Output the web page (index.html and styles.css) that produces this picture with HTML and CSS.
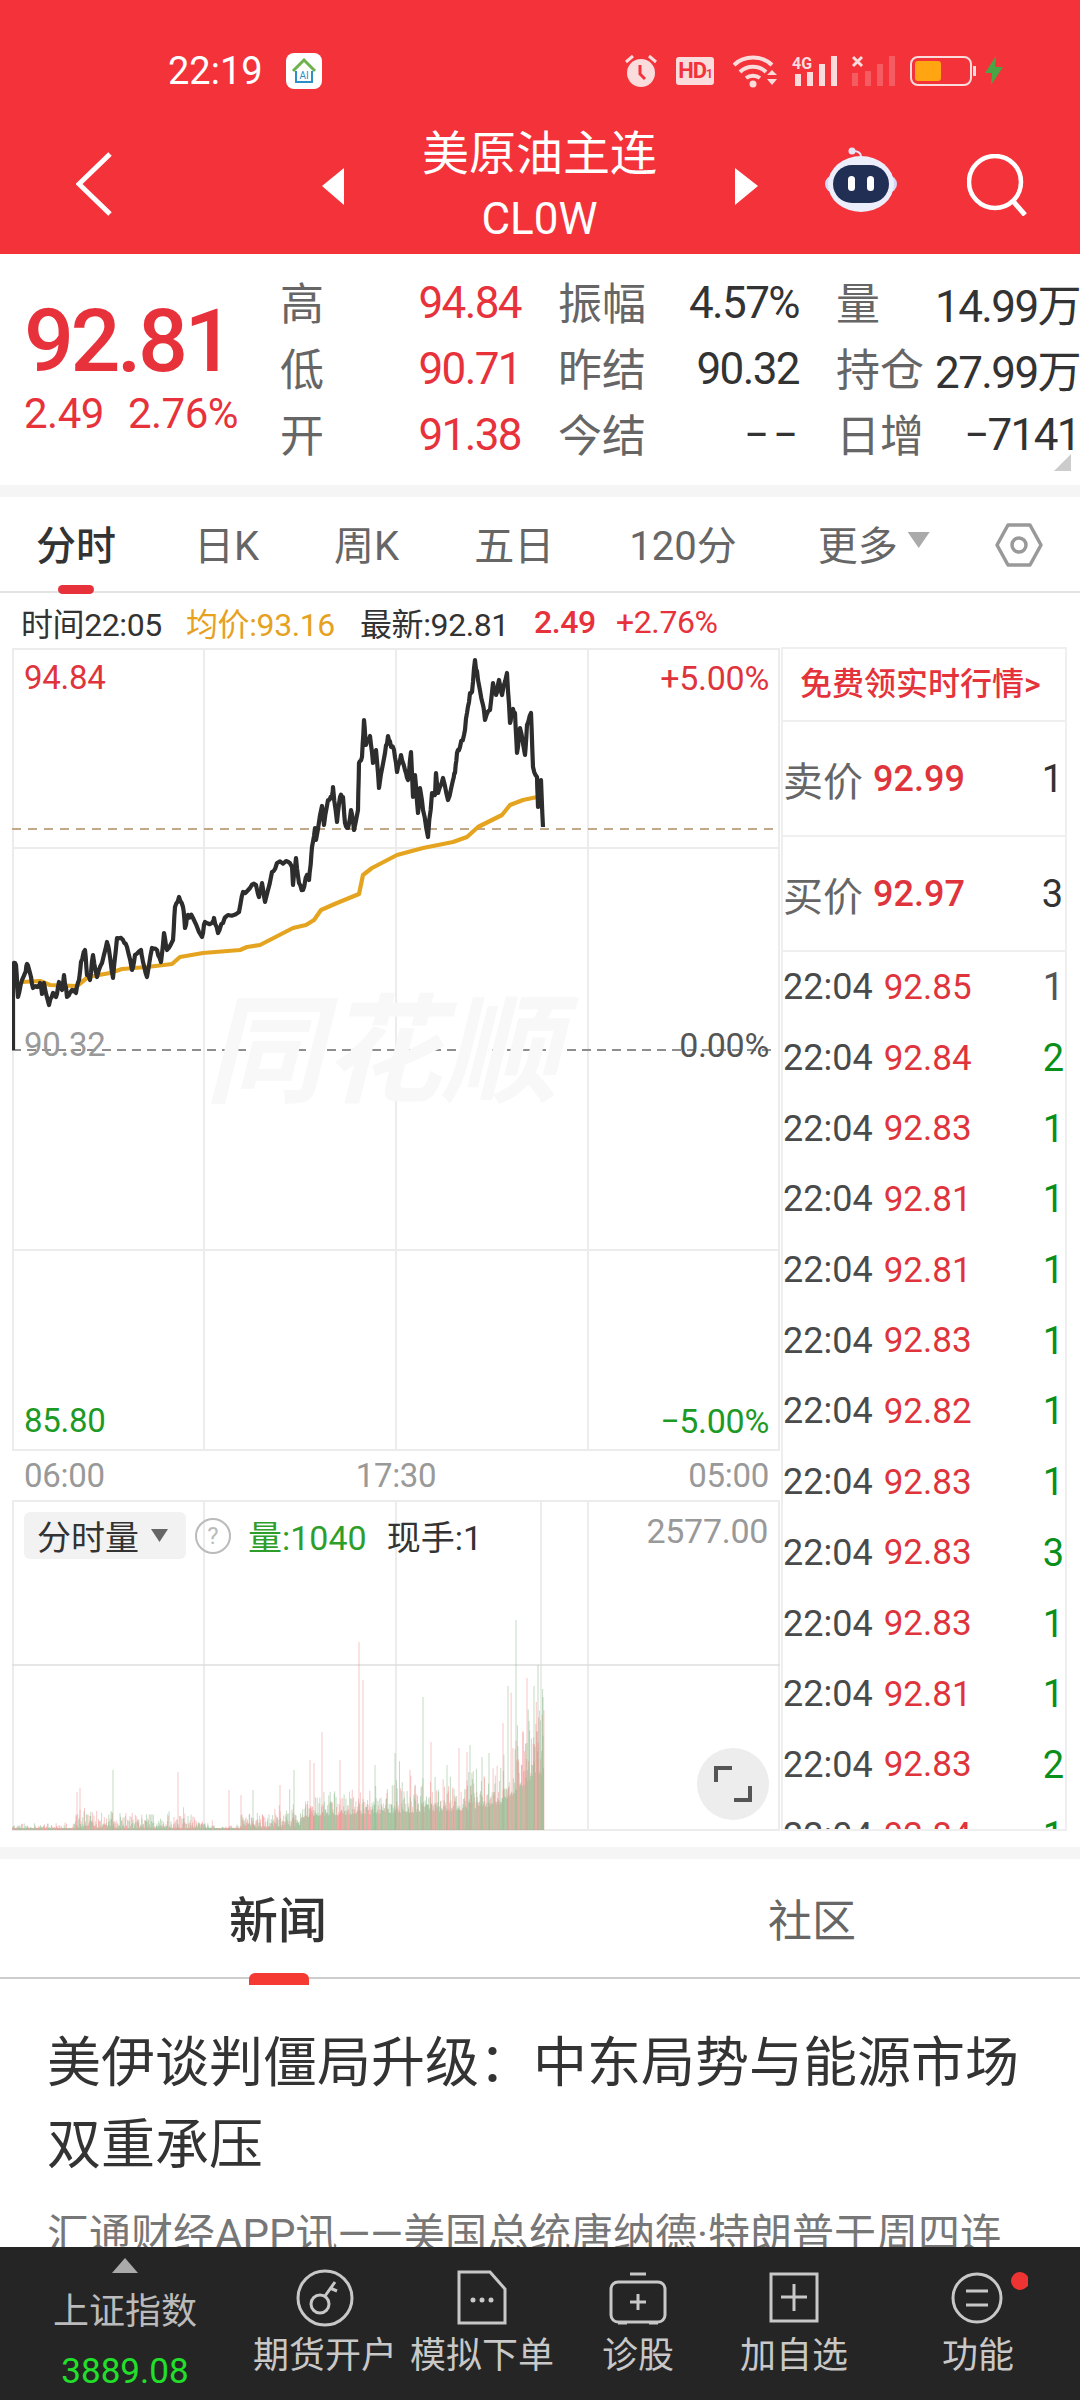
FILE: index.html
```html
<!DOCTYPE html>
<html lang="zh-CN">
<head>
  <meta charset="UTF-8" />
  <meta name="viewport" content="width=device-width, initial-scale=1.0"/>
  <title>美原油主连</title>
  <link rel="stylesheet" href="styles.css">
</head>
<body>
  <header class="top">
    <div class="status">
      <span class="clock">22:19</span>
      <svg class="app-icon" width="36" height="36" viewBox="0 0 36 36">
        <rect width="36" height="36" rx="8" fill="#fff"/>
        <path d="M7 18 18 7l11 11" fill="none" stroke="#6db24a" stroke-width="3"/>
        <path d="M10 18v11h16V18" fill="none" stroke="#2b8fc9" stroke-width="2"/>
        <text x="18" y="26" font-size="10" font-family="Roboto" fill="#2b8fc9" text-anchor="middle">AI</text>
      </svg>
      <div class="status-icons">
        <svg width="32" height="33" viewBox="0 0 32 33">
          <path d="M1 8 8 2M31 8 24 2" stroke="#fbdcdc" stroke-width="3" fill="none"/>
          <circle cx="16" cy="19" r="14" fill="#fbdcdc"/>
          <path d="M15 11v9l5 5" stroke="#f3323a" stroke-width="3" fill="none"/>
        </svg>
        <span class="hd">HD<small>1</small></span>
        <svg class="wifi" width="44" height="34" viewBox="0 0 44 34">
          <path d="M1 11C11 1 29 1 39 11M7 18c7-7 19-7 26 0M13 24c4-3 10-3 14 0" fill="none" stroke="#fbdcdc" stroke-width="4"/>
          <circle cx="20" cy="30" r="3.5" fill="#fbdcdc"/>
          <path d="M34 21h10l-5-5zM34 25h10l-5 6z" fill="#fbdcdc"/>
        </svg>
        <svg width="45" height="31" viewBox="0 0 45 31">
          <text x="0" y="14" font-size="16" font-weight="700" font-family="Roboto" fill="#fbdcdc">4G</text>
          <path d="M3 19h6v12H3zM15 17h6v14h-6zM27 9h6v22h-6zM39 1h6v30h-6z" fill="#fbdcdc"/>
        </svg>
        <svg width="43" height="31" viewBox="0 0 43 31">
          <path d="M1 2l9 9M10 2l-9 9" stroke="#fbdcdc" stroke-width="3"/>
          <path d="M0 18h6v13H0zM13 16h6v15h-6zM25 9h6v22h-6zM37 1h6v30h-6z" fill="#fbdcdc" fill-opacity=".25"/>
        </svg>
        <svg class="battery" width="67" height="30" viewBox="0 0 67 30">
          <rect x="1" y="1" width="60" height="28" rx="7" fill="none" stroke="#fbdcdc" stroke-width="2"/>
          <rect x="5" y="5" width="26" height="20" rx="3" fill="#ffa512"/>
          <rect x="63" y="10" width="3" height="10" fill="#fbdcdc"/>
        </svg>
        <svg class="bolt" width="18" height="29" viewBox="0 0 18 29">
          <path d="M11 0 0 17h7l-1 12L18 11h-8z" fill="#4aa344"/>
        </svg>
      </div>
    </div>
    <nav class="nav">
      <svg class="back" width="36" height="64" viewBox="0 0 36 64">
        <path d="M34 2 3 32l31 30" fill="none" stroke="#fff" stroke-width="5"/>
      </svg>
      <svg class="arrow-l" width="22" height="37" viewBox="0 0 22 37"><path d="M22 0v37L0 18z" fill="#fff"/></svg>
      <div class="title">
        <div class="name">美原油主连</div>
        <div class="code">CL0W</div>
      </div>
      <svg width="23" height="37" viewBox="0 0 23 37"><path d="M0 0v37l23-19z" fill="#fff"/></svg>
      <svg class="robot" width="72" height="65" viewBox="0 0 72 65">
        <circle cx="27" cy="4" r="3.5" fill="#e8e6f6"/>
        <path d="M28 4c5 0 8 2 8 6" fill="none" stroke="#e8e6f6" stroke-width="2"/>
        <rect x="0" y="28" width="72" height="18" rx="9" fill="#d5d6f4"/>
        <ellipse cx="36" cy="37" rx="33" ry="28" fill="#edeefb"/>
        <rect x="8" y="18" width="56" height="38" rx="19" fill="#222f55"/>
        <rect x="23" y="29" width="7" height="15" rx="3.5" fill="#fff"/>
        <rect x="42" y="29" width="7" height="15" rx="3.5" fill="#fff"/>
      </svg>
      <svg class="search" width="60" height="62" viewBox="0 0 60 62">
        <circle cx="28" cy="28" r="26" fill="none" stroke="#fff" stroke-width="4.5"/>
        <path d="M46 47l12 14" stroke="#fff" stroke-width="5"/>
      </svg>
    </nav>
  </header>

  <section class="quote">
    <div class="now">
      <div class="price">92.81</div>
      <div class="change"><span>2.49</span><span>2.76%</span></div>
    </div>
    <div class="stats">
      <div class="stat"><label>高</label><b class="up">94.84</b></div>
      <div class="stat"><label>振幅</label><b>4.57%</b></div>
      <div class="stat"><label>量</label><b>14.99万</b></div>
      <div class="stat"><label>低</label><b class="up">90.71</b></div>
      <div class="stat"><label>昨结</label><b>90.32</b></div>
      <div class="stat"><label>持仓</label><b>27.99万</b></div>
      <div class="stat"><label>开</label><b class="up">91.38</b></div>
      <div class="stat"><label>今结</label><b class="dash">−−</b></div>
      <div class="stat"><label>日增</label><b>−7141</b></div>
    </div>
    <i class="corner"></i>
  </section>

  <div class="gap"></div>

  <div class="tabs">
    <span class="tab active">分时</span>
    <span class="tab">日K</span>
    <span class="tab">周K</span>
    <span class="tab">五日</span>
    <span class="tab">120分</span>
    <span class="tab more">更多<i></i></span>
    <svg class="hex" width="48" height="44" viewBox="0 0 48 44">
      <path d="M13 2h22l11 20-11 20H13L2 22z" fill="none" stroke="#999" stroke-width="3.5" stroke-linejoin="round"/>
      <circle cx="24" cy="22" r="7" fill="none" stroke="#999" stroke-width="3.5"/>
    </svg>
  </div>

  <div class="info">
    <span class="i-time">时间22:05</span>
    <span class="i-avg">均价:93.16</span>
    <span class="i-last">最新:92.81</span>
    <span class="i-chg">2.49</span>
    <span class="i-pct">+2.76%</span>
  </div>

  <div class="market">
    <div class="chart">
      <!-- viewBox uses page coordinates so the traced points stay readable -->
      <svg class="plot" width="768" height="1184" viewBox="12 648 768 1184">
        <g stroke="#ececec" stroke-width="2">
          <path d="M13 648v803M204 648v803M396 648v803M588 648v803M779 648v803" fill="none"/>
          <path d="M12 649h768M12 848h768M12 1250h768M12 1450h768" fill="none"/>
          <path d="M13 1501v329M204 1501v329M396 1501v329M588 1501v329M541 1501v329M779 1501v329" fill="none"/>
          <path d="M12 1501h768M12 1830h768" fill="none"/>
        </g>
        <path d="M12 1665h768" stroke="#dedede" stroke-width="1.5"/>
        <path d="M12 829h768" stroke="#c0a888" stroke-width="2" stroke-dasharray="9 7"/>
        <path d="M12 1050h762" stroke="#8e8e8e" stroke-width="2" stroke-dasharray="9 6"/>
        <path id="volRed" fill="none" stroke="#ee7f7f" stroke-opacity=".55" stroke-width=".8"/>
        <path id="volGreen" fill="none" stroke="#80b480" stroke-opacity=".6" stroke-width=".8"/>
        <polyline id="avgLine" fill="none" stroke="#e5a41f" stroke-width="4.2" stroke-linejoin="round"/>
        <polyline id="priceLine" fill="none" stroke="#2d2d2d" stroke-width="4.2" stroke-linejoin="round"/>
      </svg>
      <div class="watermark">同花顺</div>
      <span class="lb lb-high">94.84</span>
      <span class="lb lb-hp">+5.00%</span>
      <span class="lb lb-base">90.32</span>
      <span class="lb lb-zero">0.00%</span>
      <span class="lb lb-low">85.80</span>
      <span class="lb lb-lp">−5.00%</span>
      <span class="lb lb-t1">06:00</span>
      <span class="lb lb-t2">17:30</span>
      <span class="lb lb-t3">05:00</span>
      <div class="vol-head">
        <span class="vol-tag">分时量<i></i></span>
        <span class="help">?</span>
        <span class="vol-now">量:1040</span>
        <span class="vol-hand">现手:1</span>
      </div>
      <span class="lb lb-max">2577.00</span>
      <button class="expand">
        <svg width="38" height="36" viewBox="0 0 38 36">
          <path d="M2 16V2h16M36 20v14H20" fill="none" stroke="#555" stroke-width="4"/>
        </svg>
      </button>
    </div>

    <aside class="side">
      <div class="promo">免费领实时行情&gt;</div>
      <div class="bid"><span class="bid-l">卖价</span><span class="bid-p">92.99</span><span class="bid-n">1</span></div>
      <div class="bid"><span class="bid-l">买价</span><span class="bid-p">92.97</span><span class="bid-n">3</span></div>
      <div class="trade"><span>22:04</span><span class="t-p">92.85</span><span class="t-n grey">1</span></div>
      <div class="trade"><span>22:04</span><span class="t-p">92.84</span><span class="t-n">2</span></div>
      <div class="trade"><span>22:04</span><span class="t-p">92.83</span><span class="t-n">1</span></div>
      <div class="trade"><span>22:04</span><span class="t-p">92.81</span><span class="t-n">1</span></div>
      <div class="trade"><span>22:04</span><span class="t-p">92.81</span><span class="t-n">1</span></div>
      <div class="trade"><span>22:04</span><span class="t-p">92.83</span><span class="t-n">1</span></div>
      <div class="trade"><span>22:04</span><span class="t-p">92.82</span><span class="t-n">1</span></div>
      <div class="trade"><span>22:04</span><span class="t-p">92.83</span><span class="t-n">1</span></div>
      <div class="trade"><span>22:04</span><span class="t-p">92.83</span><span class="t-n">3</span></div>
      <div class="trade"><span>22:04</span><span class="t-p">92.83</span><span class="t-n">1</span></div>
      <div class="trade"><span>22:04</span><span class="t-p">92.81</span><span class="t-n">1</span></div>
      <div class="trade"><span>22:04</span><span class="t-p">92.83</span><span class="t-n">2</span></div>
      <div class="trade"><span>22:04</span><span class="t-p">92.84</span><span class="t-n">1</span></div>
    </aside>
  </div>

  <div class="gap gap-news"></div>

  <div class="news-tabs">
    <span class="n-tab active">新闻</span>
    <span class="n-tab">社区</span>
  </div>

  <article class="news">
    <h2>美伊谈判僵局升级：中东局势与能源市场<br>双重承压</h2>
    <p>汇通财经APP讯——美国总统唐纳德·特朗普于周四连</p>
  </article>

  <footer class="bar">
    <div class="item index">
      <i class="tri"></i>
      <span class="idx-name">上证指数</span>
      <span class="idx-val">3889.08</span>
    </div>
    <div class="item">
      <svg width="60" height="60" viewBox="0 0 60 60">
        <circle cx="30" cy="30" r="27" fill="none" stroke="#c8c8c8" stroke-width="3"/>
        <circle cx="25" cy="36" r="9" fill="none" stroke="#c8c8c8" stroke-width="3"/>
        <path d="M30 28 40 14M35 20l7 3" fill="none" stroke="#c8c8c8" stroke-width="3"/>
      </svg>
      <span>期货开户</span>
    </div>
    <div class="item">
      <svg width="60" height="60" viewBox="0 0 60 60">
        <path d="M7 4h31l15 17v34H7z" fill="none" stroke="#c8c8c8" stroke-width="3"/>
        <circle cx="21" cy="32" r="2.5" fill="#c8c8c8"/><circle cx="30" cy="32" r="2.5" fill="#c8c8c8"/><circle cx="39" cy="32" r="2.5" fill="#c8c8c8"/>
      </svg>
      <span>模拟下单</span>
    </div>
    <div class="item">
      <svg width="60" height="60" viewBox="0 0 60 60">
        <path d="M22 6h16" stroke="#c8c8c8" stroke-width="3"/>
        <rect x="3" y="14" width="54" height="40" rx="7" fill="none" stroke="#c8c8c8" stroke-width="3"/>
        <path d="M30 26v16M22 34h16M10 55h9M41 55h9" stroke="#c8c8c8" stroke-width="3"/>
      </svg>
      <span>诊股</span>
    </div>
    <div class="item">
      <svg width="60" height="60" viewBox="0 0 60 60">
        <rect x="7" y="6" width="46" height="47" fill="none" stroke="#c8c8c8" stroke-width="3"/>
        <path d="M30 16v27M17 29h26" stroke="#c8c8c8" stroke-width="3"/>
      </svg>
      <span>加自选</span>
    </div>
    <div class="item">
      <svg width="100" height="60" viewBox="0 0 100 60">
        <circle cx="49" cy="30" r="24" fill="none" stroke="#c8c8c8" stroke-width="3"/>
        <path d="M38 23h22M38 37h22" stroke="#c8c8c8" stroke-width="3"/>
        <circle cx="92" cy="13" r="9" fill="#ee3333"/>
      </svg>
      <span>功能</span>
    </div>
  </footer>

  <script src="chart.js"></script>
</body>
</html>
```

FILE: styles.css
```css
* { box-sizing: border-box; }
html, body { margin: 0; padding: 0; }
body {
  position: relative;
  width: 1080px;
  height: 2400px;
  overflow: hidden;
  background: #fff;
  color: #333;
  font-family: Roboto, "Noto Sans CJK SC", sans-serif;
}

/* red header */
.top {
  height: 254px;
  padding-top: 52px;
  background: #f3323a;
  color: #fff;
}
.status { display: flex; align-items: center; height: 37px; padding: 0 77px 0 168px; }
.clock { font-size: 38px; width: 118px; }
.status-icons { display: flex; align-items: center; gap: 15px; margin-left: auto; }
.hd {
  display: flex;
  align-items: baseline;
  justify-content: center;
  width: 38px;
  height: 28px;
  margin: 0 4px;
  border-radius: 3px;
  background: #fbdcdc;
  color: #f3323a;
  font-size: 22px;
  font-weight: 700;
  line-height: 28px;
  letter-spacing: -1px;
}
.hd small { font-size: 12px; }
.battery { margin-right: -7px; }
.nav { display: flex; align-items: center; height: 107px; margin-top: 44px; padding-left: 76px; }
.back { margin-bottom: 5px; }
.arrow-l { margin-left: 210px; }
.title { align-self: flex-start; width: 391px; margin-top: -3px; text-align: center; }
.name { font-size: 47px; line-height: 47px; }
.code { margin-top: 20px; font-size: 44px; line-height: 44px; }
.robot { margin-left: 67px; margin-bottom: 14px; }
.search { margin-left: 70px; margin-bottom: 3px; }

/* quote block */
.quote { position: relative; display: flex; height: 231px; }
.now { width: 281px; padding: 43px 0 0 24px; color: #e7323b; }
.price { font-size: 88px; font-weight: 500; line-height: 88px; letter-spacing: -3.5px; }
.change { display: flex; gap: 24px; margin-top: 7px; font-size: 42px; line-height: 44px; letter-spacing: -.5px; }
.stats { display: grid; grid-template-columns: repeat(3, 240px); column-gap: 38px; padding-top: 16px; align-content: start; }
.stat { display: flex; justify-content: space-between; align-items: center; height: 66px; }
.stat label { margin: -5px 0 0 -1px; color: #666; font-size: 44px; }
.stat b { color: #333; font-size: 44px; font-weight: 400; letter-spacing: -1.6px; white-space: nowrap; }
.stat b.up { color: #e7323b; }
.stat b.dash { letter-spacing: 4px; margin-right: -3px; }
.stat:nth-child(3n) b { margin-right: -3px; }
.corner {
  position: absolute;
  right: 9px;
  bottom: 14px;
  width: 17px;
  height: 17px;
  background: #ccc;
  clip-path: polygon(100% 0, 100% 100%, 0 100%);
}

.gap { height: 12px; background: #f5f5f5; }

/* period tabs */
.tabs {
  display: flex;
  align-items: center;
  gap: 75px;
  height: 96px;
  padding: 0 0 2px 36px;
  border-bottom: 2px solid #e3e3e3;
  color: #666;
  font-size: 40px;
}
.tab { position: relative; white-space: nowrap; }
.tab.active { margin-right: 3px; color: #333; font-weight: 500; }
.tab.active::after {
  content: "";
  position: absolute;
  left: 22px;
  top: 71px;
  width: 36px;
  height: 9px;
  border-radius: 5px;
  background: #e7323b;
}
.more { display: flex; align-items: center; margin-left: 6px; }
.more i {
  width: 22px;
  height: 16px;
  margin: -6px 0 0 10px;
  background: #aaa;
  clip-path: polygon(0 0, 100% 0, 50% 100%);
}
.hex { position: absolute; left: 995px; top: 523px; }

.info {
  display: flex;
  align-items: center;
  height: 55px;
  padding: 2px 0 0 21px;
  color: #333;
  font-size: 32px;
  letter-spacing: -.4px;
  white-space: nowrap;
}
.i-time { width: 165px; }
.i-avg { width: 174px; color: #e6a11f; }
.i-last { width: 174px; }
.i-chg { width: 82px; color: #e7323b; font-weight: 500; }
.i-pct { color: #e7323b; }

/* chart + trades */
.market { display: flex; height: 1184px; padding-left: 12px; }
.chart { position: relative; width: 769px; height: 1184px; }
.plot { position: absolute; left: 0; top: 0; }
.watermark {
  position: absolute;
  left: 193px;
  top: 340px;
  color: #f8f8f8;
  font-size: 118px;
  font-style: italic;
  font-weight: 700;
  line-height: 130px;
  white-space: nowrap;
}
.lb { position: absolute; font-size: 33px; line-height: 40px; letter-spacing: -.3px; white-space: nowrap; }
.lb-high { left: 12px; top: 10px; color: #e0343c; }
.lb-hp { right: 12px; top: 10px; color: #e0343c; font-size: 34px; }
.lb-base { left: 12px; top: 377px; color: #999; }
.lb-zero { right: 12px; top: 377px; color: #555; font-size: 34px; }
.lb-low { left: 12px; top: 753px; color: #1d9a26; }
.lb-lp { right: 12px; top: 753px; color: #1d9a26; font-size: 34px; }
.lb-t1 { left: 12px; top: 808px; color: #999; }
.lb-t2 { left: 384px; top: 808px; color: #999; transform: translateX(-50%); }
.lb-t3 { right: 12px; top: 808px; color: #999; }
.lb-max { right: 13px; top: 863px; color: #999; font-size: 34px; }
.vol-head {
  position: absolute;
  left: 12px;
  top: 864px;
  display: flex;
  align-items: center;
  height: 47px;
  font-size: 34px;
  white-space: nowrap;
}
.vol-tag {
  display: flex;
  align-items: center;
  width: 162px;
  height: 47px;
  padding-left: 13px;
  border-radius: 6px;
  background: #f2f2f2;
  color: #333;
}
.vol-tag i {
  width: 17px;
  height: 13px;
  margin-left: 12px;
  background: #666;
  clip-path: polygon(0 0, 100% 0, 50% 100%);
}
.help {
  display: flex;
  align-items: center;
  justify-content: center;
  width: 36px;
  height: 36px;
  margin-left: 9px;
  border: 2px solid #bbb;
  border-radius: 50%;
  color: #bbb;
  font-size: 24px;
}
.vol-now { margin-left: 17px; color: #2e9e2a; }
.vol-hand { margin-left: 20px; color: #333; }
.expand {
  position: absolute;
  left: 685px;
  top: 1100px;
  display: flex;
  align-items: center;
  justify-content: center;
  width: 72px;
  height: 72px;
  padding: 0;
  border: 0;
  border-radius: 50%;
  background: #ededed;
}
.side {
  width: 286px;
  height: 1184px;
  margin-top: -1px;
  overflow: hidden;
  border: 2px solid #efefef;
}
.promo {
  height: 73px;
  padding-left: 17px;
  border-bottom: 2px solid #efefef;
  color: #e5333b;
  font-size: 32px;
  font-weight: 500;
  line-height: 71px;
  white-space: nowrap;
}
.bid {
  display: flex;
  align-items: center;
  height: 115px;
  padding: 0 2px 0 0;
  border-bottom: 2px solid #efefef;
}
.bid-l { color: #666; font-size: 40px; }
.bid-p { margin-left: 10px; color: #e0343c; font-size: 36px; font-weight: 500; }
.bid-n { margin-left: auto; color: #333; font-size: 38px; }
.trade {
  display: flex;
  align-items: center;
  height: 70.7px;
  padding: 0 1px 0 0;
  color: #4a4a4a;
  font-size: 36px;
}
.t-p { margin-left: 11px; color: #e0343c; font-size: 35px; }
.t-n { margin-left: auto; color: #0a8f1a; font-size: 38px; }
.t-n.grey { color: #555; }

.gap-news { margin-top: 15px; }

/* news */
.news-tabs {
  display: grid;
  grid-template-columns: 556px 512px;
  height: 120px;
  border-bottom: 2px solid #ccc;
  color: #666;
  font-size: 44px;
  text-align: center;
  line-height: 126px;
}
.n-tab { position: relative; }
.n-tab.active { color: #333; font-size: 49px; font-weight: 500; }
.n-tab.active::after {
  content: "";
  position: absolute;
  left: 249px;
  bottom: 0;
  width: 60px;
  height: 12px;
  border-radius: 6px 6px 0 0;
  background: #f53a34;
}
.news { padding: 44px 47px 0; }
.news h2 { margin: 0; color: #333; font-size: 54px; font-weight: 400; line-height: 82px; white-space: nowrap; }
.news p { margin: 20px 0 0; color: #777; font-size: 42px; line-height: 56px; white-space: nowrap; }

/* bottom bar */
.bar {
  position: absolute;
  left: 0;
  bottom: 0;
  display: grid;
  grid-template-columns: 250px 150px 164px 148px 164px 204px;
  width: 1080px;
  height: 153px;
  padding-top: 21px;
  background: #252525;
  color: #c8c8c8;
  font-size: 36px;
}
.item { display: flex; flex-direction: column; align-items: center; }
.item span { margin-top: 10px; line-height: 36px; white-space: nowrap; }
.index { margin-top: -10px; }
.tri {
  width: 26px;
  height: 15px;
  background: #aaa;
  clip-path: polygon(50% 0, 100% 100%, 0 100%);
}
.item .idx-name { margin-top: 21px; color: #bbb; }
.item .idx-val { margin-top: 24px; color: #22e02a; font-size: 35px; }
```

FILE: chart.js
```js
// traced from the day's chart, page coordinates
const price = [
  [13,1050],[13,965],[16,965],[18,997],[22,980],[25,973],[27,964],[30,973],[33,988],[37,987],[40,983],[42,994],
  [44,983],[49,1005],[53,993],[56,997],[59,982],[62,990],[64,975],[67,997],[72,990],[76,993],[79,980],[81,962],
  [85,950],[87,975],[90,980],[93,955],[97,977],[102,963],[107,942],[109,950],[113,978],[117,938],[123,940],[127,947],
  [132,970],[135,955],[141,950],[143,962],[147,977],[152,948],[157,950],[161,962],[164,933],[167,950],[173,940],[175,907],
  [179,897],[183,907],[185,928],[188,915],[193,918],[202,937],[205,922],[212,923],[214,918],[218,933],[223,923],[228,915],
  [239,912],[243,892],[250,888],[256,885],[259,897],[262,883],[265,902],[272,872],[277,863],[286,861],[292,867],[293,885],
  [296,858],[299,883],[303,890],[307,875],[309,880],[310,870],[312,847],[315,828],[316,840],[322,806],[324,825],[328,800],
  [332,798],[333,787],[337,822],[340,797],[343,797],[345,823],[348,828],[351,810],[354,830],[358,810],[359,763],[362,757],
  [364,720],[366,745],[370,736],[373,763],[376,750],[379,788],[385,753],[388,736],[391,747],[394,750],[397,772],[401,755],
  [405,770],[408,780],[411,752],[413,797],[415,775],[418,813],[420,788],[423,810],[428,837],[432,793],[435,795],[436,773],
  [438,793],[443,778],[448,800],[453,780],[455,773],[457,753],[460,747],[464,735],[467,713],[470,693],[472,692],[475,660],
  [478,680],[483,705],[485,720],[490,710],[493,683],[496,695],[499,680],[502,695],[507,673],[510,723],[512,710],[515,713],
  [517,753],[520,728],[525,755],[527,725],[531,713],[533,767],[537,777],[538,807],[541,780],[543,827]
];

const avg = [
  [22,982],[40,981],[50,985],[77,986],[88,977],[110,973],[122,969],[147,967],[172,964],[180,957],[203,953],[240,950],
  [247,947],[260,945],[293,928],[306,925],[314,920],[321,910],[337,903],[359,894],[363,875],[372,868],[397,855],[423,848],
  [453,842],[467,837],[478,827],[502,815],[510,805],[523,800],[542,796]
];

// big spikes: x, top y, green?
const spikes = [
  [359,1642,0],[516,1620,1],[538,1665,1],[527,1678,0],[508,1686,1],[423,1697,1],[322,1732,0],[363,1680,0],[113,1770,1],
  [178,1772,0],[534,1686,1],[543,1697,1],[503,1723,0],[459,1748,0],[431,1742,0],[470,1745,1],[395,1753,1],[310,1760,0],
  [314,1763,0],[294,1770,1],[77,1792,0],[80,1788,0],[467,1752,0],[482,1757,1],[489,1753,1],[229,1790,0],[241,1795,0],
  [253,1790,1],[280,1785,0],[340,1760,0],[375,1765,1],[410,1770,0],[447,1765,1]
];

// volume body height along the x axis
const envelope = [
  [12,3],[75,3],[76,10],[130,8],[205,7],[215,2],[238,3],[241,10],[300,15],[310,24],[360,28],[400,30],[470,36],[500,46],[520,72],[544,105]
];

let seed = 20240;
function rnd() {
  seed = (seed * 1664525 + 1013904223) % 4294967296;
  return seed / 4294967296;
}

function envAt(x) {
  for (let i = 1; i < envelope.length; i++) {
    const [x0, y0] = envelope[i - 1];
    const [x1, y1] = envelope[i];
    if (x <= x1) return y0 + (y1 - y0) * (x - x0) / (x1 - x0);
  }
  return 0;
}

// the real series has far more ticks than the trace, so add a bit of wiggle
const pts = [];
price.forEach((p, i) => {
  if (i > 1) {
    const q = price[i - 1];
    pts.push([(q[0] * 2 + p[0]) / 3, (q[1] * 2 + p[1]) / 3 + (rnd() - .5) * 5]);
    pts.push([(q[0] + p[0] * 2) / 3, (q[1] + p[1] * 2) / 3 + (rnd() - .5) * 5]);
  }
  pts.push(p);
});
document.getElementById('priceLine').setAttribute('points', pts.map(p => p.map(n => n.toFixed(1)).join(',')).join(' '));
document.getElementById('avgLine').setAttribute('points', avg.map(p => p.join(',')).join(' '));

let red = '';
let green = '';
for (let x = 12.5; x < 544; x += .45) {
  // early session is thin and spiky, later the bars fill in
  const spread = x < 300 ? .2 + rnd() * rnd() * 2.4 : .55 + rnd() * rnd() * 1.2;
  let h = envAt(x) * spread;
  if (rnd() < .03) h *= 1.4 + rnd();
  const seg = `M${x.toFixed(2)} 1830V${(1830 - Math.max(h, 2)).toFixed(1)}`;
  if (rnd() < .5) red += seg; else green += seg;
}
spikes.forEach(([x, top, g]) => {
  const seg = `M${x} 1830V${top}`;
  if (g) green += seg; else red += seg;
});
document.getElementById('volRed').setAttribute('d', red);
document.getElementById('volGreen').setAttribute('d', green);
```
